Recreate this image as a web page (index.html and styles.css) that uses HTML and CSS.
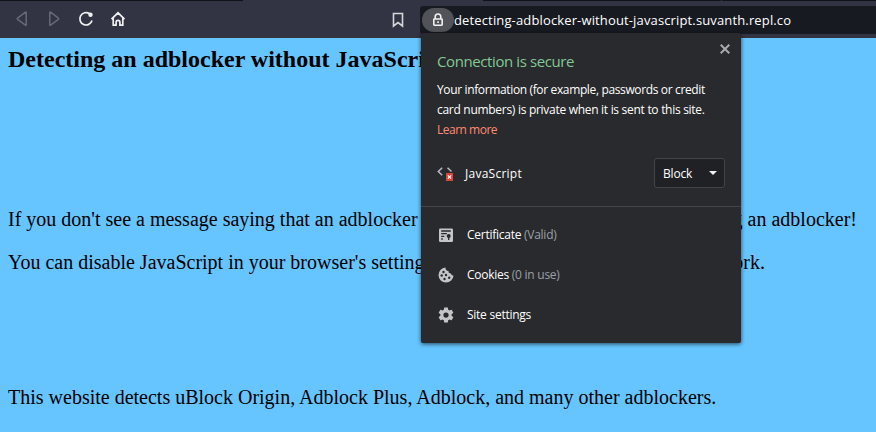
FILE: index.html
```html
<!DOCTYPE html>
<html lang="en">
<head>
<meta charset="utf-8">
<title>Detecting an adblocker without JavaScript</title>
<link rel="stylesheet" href="styles.css">
</head>
<body>
<div class="tabstrip"><i class="tab-left"></i><i class="tab-active"></i><i class="tab-gap"></i><i class="tab-gap last"></i></div>
<header class="toolbar">
  <nav class="nav">
    <svg class="dim" width="16" height="16" viewBox="0 0 16 16"><path d="M12.200 1.700v12.200q0 .8-.8.3L3.600 8.400q-.7-.6 0-1.200l7.800-6q.8-.5.8.5z"/></svg>
    <svg class="dim" width="16" height="16" viewBox="0 0 16 16"><path d="M3.800 1.700v12.200q0 .8.8.3l7.800-5.800q.7-.6 0-1.200l-7.800-6q-.8-.5-.8.5z"/></svg>
    <svg class="bright" width="16" height="16" viewBox="0 0 16 16"><path d="M11.600 2.700A6.200 6.200 0 1 0 14 9.500"/><circle class="fill" cx="12.500" cy="3.800" r="2.200"/></svg>
    <svg class="bright" width="16" height="16" viewBox="0 0 16 16"><path d="M1.500 8.200 8 1.800l6.500 6.400M3.200 7v7.200h2.900v-3a1.900 1.900 0 0 1 3.800 0v3h2.900V7"/></svg>
  </nav>
  <svg class="bookmark" width="12" height="16" viewBox="0 0 12 16"><path d="M1.500 1.500h9v12.500L6 10.500 1.500 14z"/></svg>
  <div class="address">
    <span class="lock"><svg width="12" height="14" viewBox="0 0 12 14"><path d="M3.200 6V3.800a2.800 2.800 0 0 1 5.600 0V6"/><rect x="1.800" y="6" width="8.400" height="6.200" rx=".6"/><path d="M5.200 9.100h1.600"/></svg></span>
    <span class="url">detecting-adblocker-without-javascript.suvanth.repl.co</span>
  </div>
</header>
<main class="page">
  <h1>Detecting an adblocker without JavaScript</h1>
  <p class="first"><span>If you don't see a message saying that an adblocker</span><span>using an adblocker!</span></p>
  <p class="second"><span>You can disable JavaScript in your browser's settings</span><span>work.</span></p>
  <p class="third">This website detects uBlock Origin, Adblock Plus, Adblock, and many other adblockers.</p>
</main>
<aside class="popup">
  <svg class="close" width="10" height="10" viewBox="0 0 10 10"><path d="m.7.7 8.600 8.600M9.300.7.7 9.300"/></svg>
  <section class="summary">
    <h2>Connection is secure</h2>
    <div class="info"><span class="l1">Your information (for example, passwords or credit</span><br><span class="l2">card numbers) is private when it is sent to this site.</span><br><a class="l3">Learn more</a></div>
    <div class="permission">
      <svg width="17" height="16" viewBox="0 0 17 16"><path class="code" d="M5.200 2.700 1.300 6.500l3.900 3.800M10.500 2.700l4 3.800"/><rect class="badge" x="9" y="8" width="7" height="8"/><path class="cross" d="m10.900 10.400 3.200 3.200m0-3.200-3.200 3.200"/></svg>
      <span class="name">JavaScript</span>
      <span class="select"><span>Block</span><i></i></span>
    </div>
  </section>
  <ul>
    <li><svg width="16" height="16" viewBox="0 0 16 16"><rect class="solid" x="1" y="1.500" width="14" height="13.500" rx="1.200"/><path class="cut" d="M3.200 4h9.600M3.200 6.700h5.600M3.200 9.400h3M3.200 12h1.600M10.700 9v4"/><circle class="hole" cx="10.700" cy="9" r="2"/></svg><span class="c1">Certificate <em>(Valid)</em></span></li>
    <li><svg width="16" height="16" viewBox="0 0 16 16"><path class="solid" d="M7.500.6a7.500 7.500 0 1 0 8 7.800q-2.200.5-2.500-1.900-2.700.4-2.600-2.400Q7.400 3.700 7.500.6z"/><g class="hole"><circle cx="5.500" cy="5" r="1.200"/><circle cx="3.700" cy="8.500" r="1.200"/><circle cx="8" cy="8" r="1.200"/><circle cx="6.500" cy="12" r="1.200"/><circle cx="11.200" cy="10.700" r="1.200"/></g></svg><span class="c2">Cookies <em>(0 in use)</em></span></li>
    <li><svg width="18" height="18" viewBox="0 0 24 24"><path class="solid" d="M19.430 12.980c.04-.32.070-.64.070-.98s-.03-.66-.07-.98l2.110-1.650c.19-.15.240-.42.120-.64l-2-3.460c-.12-.22-.39-.3-.61-.22l-2.490 1c-.52-.4-1.080-.73-1.690-.98l-.38-2.650C14.460 2.180 14.250 2 14 2h-4c-.25 0-.46.18-.49.42l-.38 2.650c-.61.250-1.170.590-1.690.980l-2.490-1c-.23-.09-.49 0-.61.22l-2 3.460c-.13.22-.07.490.120.640l2.110 1.650c-.04.320-.07.650-.07.980s.03.660.07.980l-2.110 1.650c-.19.150-.24.420-.12.640l2 3.460c.12.220.39.300.61.220l2.490-1c.52.400 1.080.730 1.690.980l.38 2.650c.03.240.24.420.49.420h4c.25 0 .46-.18.490-.42l.38-2.650c.61-.25 1.170-.59 1.690-.98l2.490 1c.23.090.49 0 .61-.22l2-3.460c.12-.22.070-.49-.12-.64l-2.110-1.650z"/><circle class="hole" cx="12" cy="12" r="3.500"/></svg><span class="c3">Site settings</span></li>
  </ul>
</aside>
</body>
</html>
```
FILE: styles.css
```css
* { box-sizing: border-box; }
body { margin: 0; height: 432px; overflow: hidden; background: #66c5ff; font-family: "Open Sans", "Noto Sans", sans-serif; }
svg { display: block; flex: none; fill: none; }
.tabstrip { display: flex; height: 1px; background: #11111a; }
.tabstrip i { height: 1px; }
.tab-left { width: 243px; }
.tab-active { width: 240px; background: #323443; }
.tab-gap { width: 239px; border-right: 1px solid #323443; }
.last { width: 154px; border: 0; }
.toolbar { height: 37px; display: flex; align-items: center; background: #323443; }
.nav { display: flex; gap: 16px; padding-left: 14px; width: 392px; margin-top: -1px; }
.nav svg { stroke-width: 1.5; }
.dim { stroke: #686976; }
.bright { stroke: #f0f0f2; }
.nav .bright { stroke-width: 1.7; }
.fill { fill: #f0f0f2; stroke: none; }
.bookmark { stroke: #d6d6da; stroke-width: 1.6; }
.address { flex: 1; height: 28px; margin: 0 0 0 16px; background: #171a21; border-radius: 3px 0 0 3px; display: flex; align-items: center; padding-left: 2px; }
.lock { width: 32px; height: 24px; border-radius: 12px; background: #515358; display: flex; align-items: center; justify-content: center; }
.lock svg { stroke: #f1f1f1; stroke-width: 1.6; }
.url { color: #fff; font-size: 13px; line-height: 18px; letter-spacing: .14px; white-space: nowrap; }
.page { font-family: "Liberation Serif", serif; color: #000; padding: 8px; }
.page h1 { font-size: 24px; line-height: 27px; margin: 0; }
.page p { margin: 0; font-size: 20px; line-height: 23px; display: flex; justify-content: space-between; white-space: nowrap; }
.page .first { margin-top: 135px; width: 849px; }
.page .second { margin-top: 20px; width: 757px; }
.page .third { margin-top: 112px; }
.popup { position: absolute; left: 421px; top: 33px; width: 320px; height: 310px; background: #292a2d; color: #fff; border-radius: 2px; box-shadow: 0 1px 4px rgba(0,0,0,.65); font-size: 12px; }
.close { position: absolute; right: 11px; top: 11px; stroke: #a7a9ad; stroke-width: 2; }
.summary { height: 174px; padding: 17px 16px 0; border-bottom: 1px solid #434447; }
h2 { margin: 0; font-size: 15px; line-height: 22px; font-weight: 400; letter-spacing: -.4px; color: #81c995; white-space: nowrap; }
.info { margin-top: 8px; line-height: 20px; white-space: nowrap; }
.l1 { letter-spacing: -.36px; }
.l2 { letter-spacing: -.29px; }
.l3 { letter-spacing: -.5px; }
.info a { color: #ff8a70; }
.permission { display: flex; align-items: center; margin-top: 18px; height: 30px; }
.name { margin-left: 11px; flex: 1; letter-spacing: .25px; }
.select { width: 71px; height: 30px; background: #202124; border: 1px solid #434447; border-radius: 3px; display: flex; align-items: center; justify-content: space-between; padding: 0 7px 0 8px; letter-spacing: -.2px; }
.select i { border: 4px solid transparent; border-top-color: #f1f1f1; border-bottom: 0; }
.code { stroke: #b9bbbe; stroke-width: 1.5; }
.badge { fill: #db4437; }
.cross { stroke: #fff; stroke-width: 1.2; }
ul { list-style: none; margin: 8px 0 0; padding: 0; }
li { height: 40px; display: flex; align-items: center; padding-left: 16px; }
li svg { width: 18px; margin-right: 12px; }
li span { letter-spacing: -.26px; margin-top: -1px; }
.solid { fill: #c4c5c7; }
.hole { fill: #292a2d; }
.cut { stroke: #292a2d; stroke-width: 1.3; }
em { font-style: normal; color: #9aa0a6; }
```
